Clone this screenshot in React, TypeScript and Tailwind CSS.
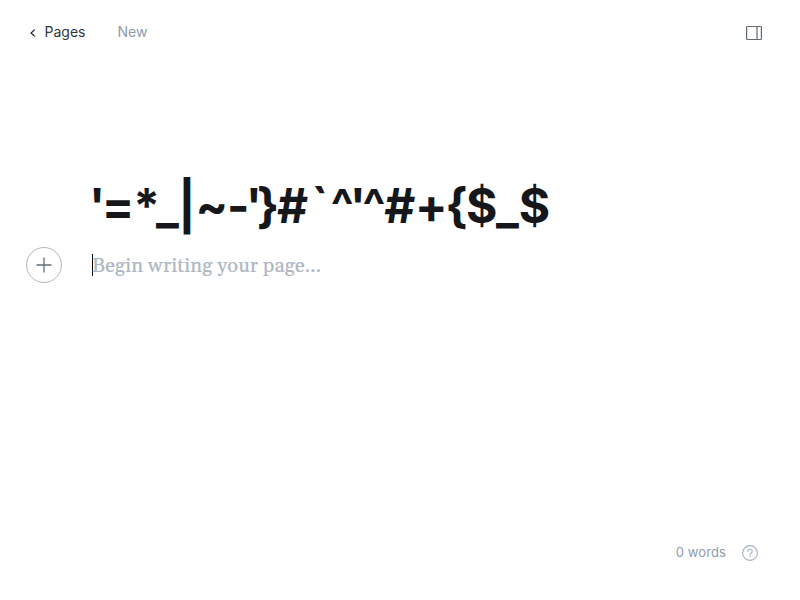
const title: [string, string][] = [
  ["'", "tracking-[-3.5px]"],
  ["=", "tracking-[-1px]"],
  ["*", "tracking-[-4.1px]"],
  ["_", "tracking-[-1px]"],
  ["|", "tracking-[-0.3px]"],
  ["~", "tracking-[-1px]"],
  ["-", "tracking-[-3.8px]"],
  ["'", "tracking-[-5.2px]"],
  ["}", "tracking-[-2.3px]"],
  ["#", "tracking-[2.8px]"],
  ["`", "tracking-[2.1px]"],
  ["^", "tracking-[-4.2px]"],
  ["'", "tracking-[-3.7px]"],
  ["^", "tracking-[-1.5px]"],
  ["#", "tracking-[-0.4px]"],
  ["+", "tracking-[-2.3px]"],
  ["{", "tracking-[-1.9px]"],
  ["$", "tracking-[-1.2px]"],
  ["_", "tracking-[-0.3px]"],
  ["$", "tracking-[0px]"],
];

export default function App() {
  return (
    <div className="flex h-[600px] w-[800px] flex-col overflow-hidden bg-white font-['Inter',sans-serif]">
      <header className="flex h-[65px] items-center pl-[29.5px] pr-[38px] text-[14px] leading-5">
        <svg className="mt-px h-[8px] w-[6px]" viewBox="0 0 6 8" fill="none" stroke="#15171a" strokeWidth="1.1" strokeLinecap="round" strokeLinejoin="round">
          <path d="M4.4 .8 1.1 4l3.3 3.2" />
        </svg>
        <a className="-mt-px mb-px ml-[9px] text-[#30373d]">Pages</a>
        <span className="-mt-px mb-px ml-8 text-[#8e9cac]">New</span>
        <button className="ml-auto mt-px">
          <svg className="h-4 w-4" viewBox="0 0 16 16" fill="none" stroke="#626a72">
            <rect x=".6" y="1.5" width="14.8" height="13" rx=".8" strokeWidth="1.2" />
            <path d="M11 1.5v13" strokeWidth="1.2" />
          </svg>
        </button>
      </header>
      <main className="flex-1 pt-[110px]">
        <h1 className="ml-[89px] h-[61px] whitespace-nowrap text-[48px] font-bold leading-[61px] text-[#15171a] [font-kerning:none]">
          {title.map(([glyph, spacing], i) => (
            <span key={i} className={spacing}>{glyph}</span>
          ))}
        </h1>
        <div className="mt-[11px] flex h-9 items-center pl-[26px]">
          <button className="flex h-9 w-9 items-center justify-center rounded-full border border-[#aeb7c1]">
            <svg className="h-4 w-4" viewBox="0 0 16 16" stroke="#626d79" strokeWidth="1.3">
              <path d="M8 .5v15M.5 8h15" />
            </svg>
          </button>
          <div className="ml-[30px] h-[22px] w-px bg-black" />
          <p className="-ml-px mt-[2px] font-['Gelasio',serif] text-[20px] leading-8 tracking-[0.11px] text-[#aeb7c1] [-webkit-text-stroke:0.2px_#aeb7c1]">Begin writing your page...</p>
        </div>
      </main>
      <footer className="flex h-[94px] items-center justify-end pr-[42px] text-[13px] text-[#8e9cac]">
        <span className="tracking-[0.1px]">0 words</span>
        <svg className="ml-4 h-4 w-4" viewBox="0 0 16 16" fill="none" stroke="#a3afbc" strokeWidth="1.1" strokeLinecap="round" strokeLinejoin="round">
          <circle cx="8" cy="8" r="7.4" />
          <path d="M5.9 6.4a2.15 2.15 0 1 1 3 2q-.9.4-.9 1.3" />
          <circle cx="8" cy="11.8" r=".2" />
        </svg>
      </footer>
    </div>
  );
}
